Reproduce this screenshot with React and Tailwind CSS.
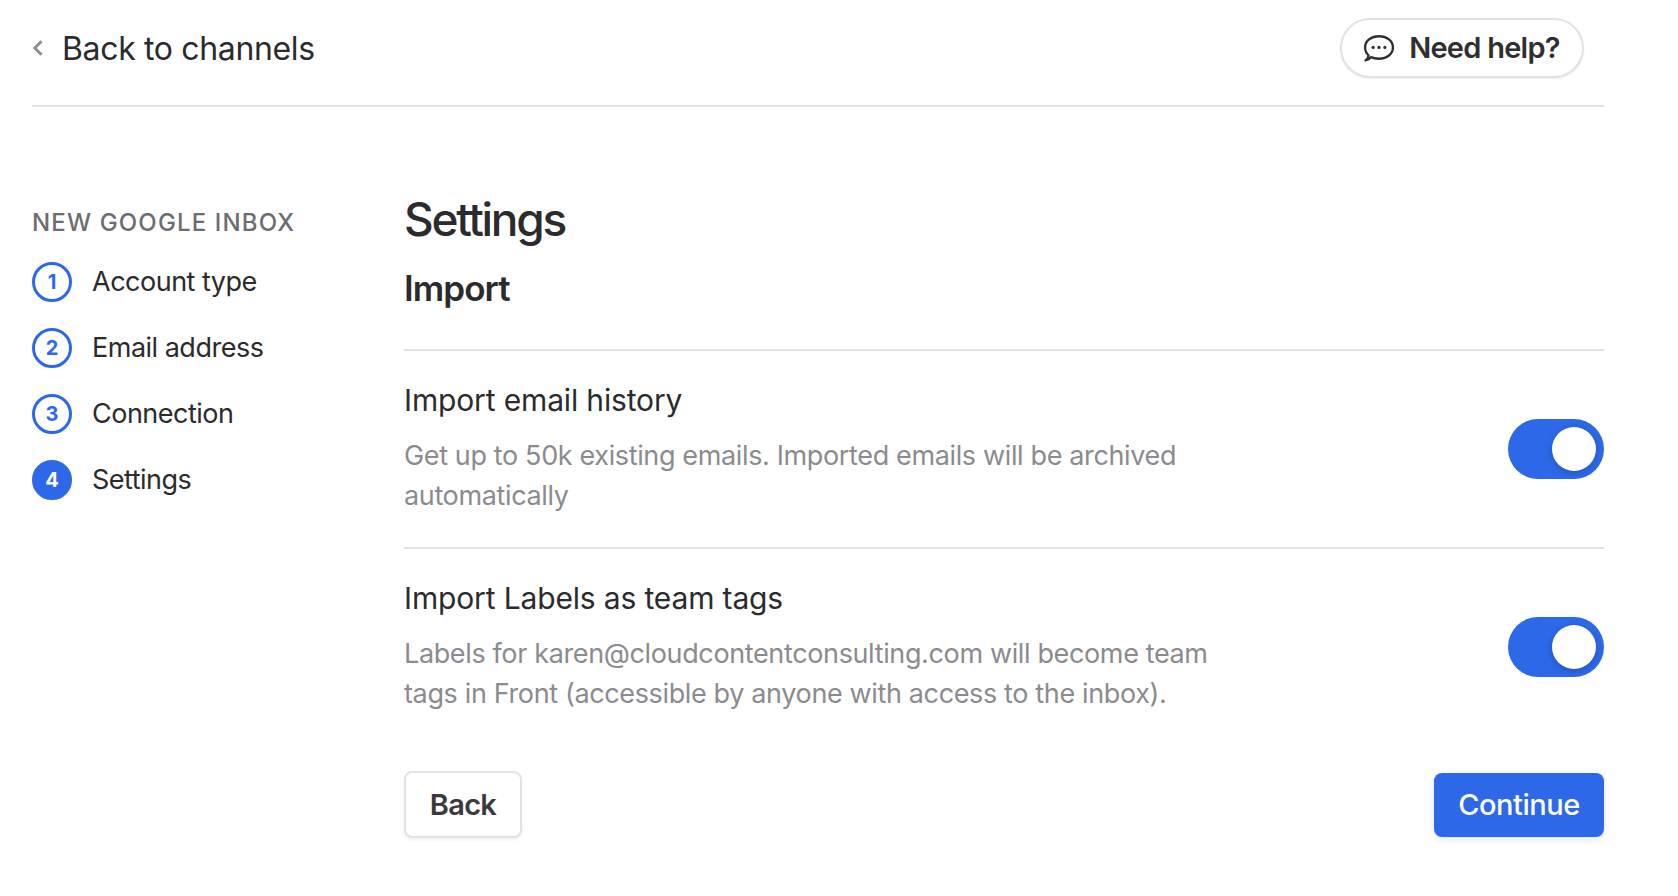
const font = { fontFamily: 'Inter, sans-serif' };

const steps = [
  { n: 1, label: 'Account type' },
  { n: 2, label: 'Email address' },
  { n: 3, label: 'Connection' },
  { n: 4, label: 'Settings', active: true },
];

function Toggle() {
  return (
    <div className="mt-[2px] flex h-[60px] w-[96px] shrink-0 items-center justify-end rounded-full bg-[#2c68e8] pr-2">
      <div className="h-11 w-11 rounded-full bg-white shadow-[0_2px_6px_rgba(0,0,0,0.2)]" />
    </div>
  );
}

function ImportRow({ title, children, border }) {
  return (
    <div className={`flex items-center justify-between ${border ? 'border-b-2 border-[#e2e2e2] pb-[31px]' : ''} pt-[29px]`}>
      <div>
        <h3 className="text-[30px] leading-[40px] tracking-[-0.15px] text-[#2b2b2d]">{title}</h3>
        <p className="mt-4 w-[820px] text-[27px] leading-[40px] tracking-[-0.365px] text-[#8b8b8f]">{children}</p>
      </div>
      <Toggle />
    </div>
  );
}

export default function App() {
  return (
    <div className="h-[896px] w-full overflow-hidden bg-white pl-8 pr-[74px]" style={font}>
      <header className="flex h-[107px] items-center justify-between border-b-2 border-[#e2e2e2] pb-[10px] pr-5">
        <div className="flex items-center text-[#2b2b2d]">
          <svg width="12" height="18" viewBox="0 0 12 18" fill="none" className="mr-[18px]">
            <path d="M9.5 2.2 L2.8 9 L9.5 15.8" stroke="#8f8f93" strokeWidth="3" />
          </svg>
          <span className="pt-[3px] text-[32px] leading-10 tracking-[-0.35px]">Back to channels</span>
        </div>
        <button className="flex h-[60px] w-[244px] items-center justify-center gap-[15px] rounded-full border-2 border-[#e2e2e2] bg-white text-[29px] font-semibold tracking-[-0.75px] text-[#2f2f31] shadow-[0_1px_2px_rgba(0,0,0,0.06)]">
          <svg width="30" height="28" viewBox="1 0 28 26" fill="none" stroke="#2f2f31" strokeWidth="2.2">
            <path d="M2.5 24.5 C5 24 6.5 23 7.5 21.5 C9.5 22.5 12 23 15 23 C22.5 23 28 18.5 28 12.5 C28 6.5 22.5 2 15 2 C7.5 2 2 6.5 2 12.5 C2 15.5 3.2 18 5.2 19.8 C5 21.5 4 23.5 2.5 24.5 Z" strokeLinejoin="round" />
            <circle cx="9.5" cy="12.5" r="1.5" fill="#2f2f31" stroke="none" />
            <circle cx="15" cy="12.5" r="1.5" fill="#2f2f31" stroke="none" />
            <circle cx="20.5" cy="12.5" r="1.5" fill="#2f2f31" stroke="none" />
          </svg>
          Need help?
        </button>
      </header>

      <div className="flex">
        <aside className="w-[372px] shrink-0 pt-[100px]">
          <div className="text-[24px] font-medium leading-8 tracking-[1.15px] text-[#6d6d71]">NEW GOOGLE INBOX</div>
          <ul className="mt-[23px] flex flex-col gap-[26px]">
            {steps.map((s) => (
              <li key={s.n} className="flex h-10 items-center gap-5">
                <span
                  className={`flex h-10 w-10 items-center justify-center rounded-full border-[3px] border-[#2c68e8] text-[20px] font-bold ${
                    s.active ? 'bg-[#2c68e8] text-white' : 'text-[#2c68e8]'
                  }`}
                >
                  {s.n}
                </span>
                <span className="text-[27px] tracking-[-0.5px] text-[#2b2b2d]">{s.label}</span>
              </li>
            ))}
          </ul>
        </aside>

        <main className="min-w-0 flex-1 pt-[82px]">
          <h1 className="text-[46px] font-medium leading-[60px] tracking-[-2.3px] text-[#2b2b2d]">Settings</h1>
          <h2 className="mt-[15px] text-[35px] font-semibold leading-[48px] tracking-[-0.95px] text-[#2b2b2d]">Import</h2>
          <div className="mt-[37px] border-t-2 border-[#e2e2e2]">
            <ImportRow title="Import email history" border>
              Get up to 50k existing emails. Imported emails will be archived automatically
            </ImportRow>
            <ImportRow title="Import Labels as team tags">
              Labels for karen@cloudcontentconsulting.com will become team tags in Front (accessible by anyone with access to the inbox).
            </ImportRow>
          </div>
          <div className="mt-[57px] flex items-center justify-between">
            <button className="h-[67px] w-[118px] rounded-lg border-2 border-[#e2e2e2] bg-white text-[29px] font-semibold tracking-[-0.7px] text-[#3a3a3e] shadow-[0_2px_3px_rgba(0,0,0,0.06)]">
              Back
            </button>
            <button className="h-16 w-[170px] rounded-lg bg-[#2c68e8] text-[29px] font-medium tracking-[-0.5px] text-white shadow-[0_2px_6px_rgba(0,0,0,0.12)]">
              Continue
            </button>
          </div>
        </main>
      </div>
    </div>
  );
}
